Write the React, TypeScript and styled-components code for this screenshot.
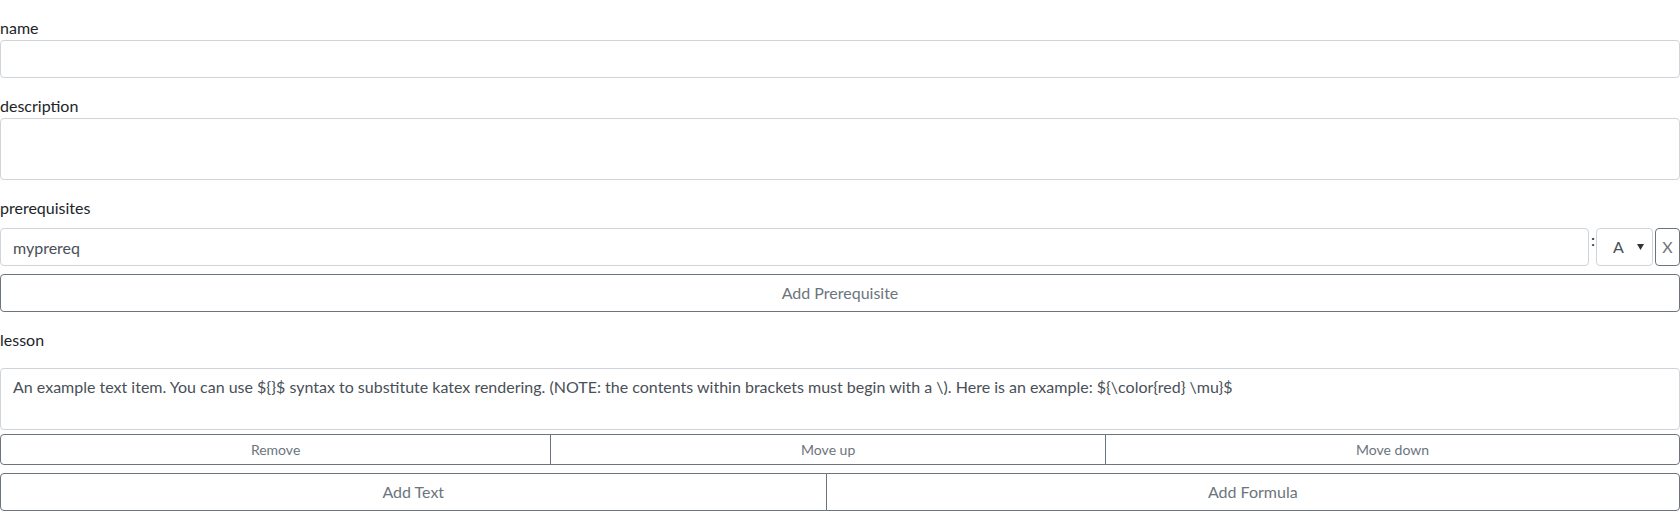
import React from "react";
import styled, { createGlobalStyle, css } from "styled-components";

const GlobalStyle = createGlobalStyle`
  *, *::before, *::after { box-sizing: border-box; }
  body {
    margin: 0;
    background: #ffffff;
    color: #212529;
    font-family: "Lato", "Liberation Sans", sans-serif;
    font-size: 16px;
    line-height: 1.5;
  }
`;

const Form = styled.form`
  padding-top: 16px;
  display: flex;
  flex-direction: column;
`;

const FormGroup = styled.div`
  margin-bottom: 16px;
  display: flex;
  flex-direction: column;
`;

const Label = styled.label`
  display: block;
  margin: 0;
  font-size: 16px;
  line-height: 24px;
  color: #212529;
`;

const controlBase = css`
  display: block;
  width: 100%;
  padding: 6px 12px;
  font-family: "Lato", "Liberation Sans", sans-serif;
  font-size: 16px;
  line-height: 24px;
  color: #495057;
  background: #ffffff;
  border: 1px solid #ced4da;
  border-radius: 4px;
  outline: none;
`;

const TextInput = styled.input`
  ${controlBase};
  height: 38px;
`;

const TextArea = styled.textarea<{ $gap?: number }>`
  ${controlBase};
  height: 62px;
  resize: none;
  overflow: hidden;
  margin-top: ${(p) => p.$gap ?? 0}px;
`;

const PrereqList = styled.div`
  display: flex;
  flex-direction: column;
  gap: 8px;
  padding-top: 8px;
`;

const PrereqRow = styled.div`
  display: flex;
  align-items: flex-start;
`;

const RowInput = styled(TextInput)`
  flex: 1 1 auto;
  width: auto;
  min-width: 0;
`;

const Colon = styled.span`
  font-size: 16px;
  line-height: 24px;
  color: #212529;
  padding: 0 1px 0 2px;
`;

const SelectWrap = styled.div`
  position: relative;
  width: 57px;
  flex: 0 0 57px;
`;

const Select = styled.select`
  ${controlBase};
  height: 38px;
  padding: 6px 20px 6px 16px;
  appearance: none;
  -webkit-appearance: none;
  cursor: pointer;
`;

const Caret = styled.svg`
  position: absolute;
  right: 9px;
  top: 16px;
  width: 7px;
  height: 6px;
  pointer-events: none;
`;

const outlineBtn = css`
  font-family: "Lato", "Liberation Sans", sans-serif;
  color: #6c757d;
  background: #ffffff;
  border: 1px solid #6c757d;
  border-radius: 4px;
  cursor: pointer;
  text-align: center;
`;

const RemoveX = styled.button`
  ${outlineBtn};
  margin-left: 2px;
  width: 25px;
  height: 38px;
  padding: 0;
  font-size: 16px;
  line-height: 24px;
`;

const BlockButton = styled.button`
  ${outlineBtn};
  display: block;
  width: 100%;
  height: 38px;
  padding: 6px 12px;
  font-size: 16px;
  line-height: 24px;
`;

const BtnGroup = styled.div<{ $small?: boolean; $gap: number }>`
  display: flex;
  width: 100%;
  margin-top: ${(p) => p.$gap}px;
`;

const GroupButton = styled.button<{ $small?: boolean }>`
  ${outlineBtn};
  flex: 1 1 auto;
  height: ${(p) => (p.$small ? 31 : 38)}px;
  padding: ${(p) => (p.$small ? "4px 8px" : "6px 12px")};
  font-size: ${(p) => (p.$small ? 14 : 16)}px;
  line-height: ${(p) => (p.$small ? 21 : 24)}px;
  white-space: nowrap;
  & + & {
    margin-left: -1px;
  }
  &:not(:first-child) {
    border-top-left-radius: 0;
    border-bottom-left-radius: 0;
  }
  &:not(:last-child) {
    border-top-right-radius: 0;
    border-bottom-right-radius: 0;
  }
`;

const LESSON_TEXT =
  "An example text item. You can use ${}$ syntax to substitute katex rendering. (NOTE: the contents within brackets must begin with a \\). Here is an example: ${\\color{red} \\mu}$";

export default function App() {
  return (
    <>
      <GlobalStyle />
      <Form onSubmit={(e) => e.preventDefault()}>
        <FormGroup>
          <Label htmlFor="name">name</Label>
          <TextInput id="name" type="text" defaultValue="" />
        </FormGroup>
        <FormGroup>
          <Label htmlFor="description">description</Label>
          <TextArea id="description" rows={2} defaultValue="" />
        </FormGroup>
        <FormGroup>
          <Label>prerequisites</Label>
          <PrereqList>
            <PrereqRow>
              <RowInput type="text" defaultValue="myprereq" />
              <Colon>:</Colon>
              <SelectWrap>
                <Select defaultValue="A">
                  <option value="A">A</option>
                  <option value="B">B</option>
                  <option value="C">C</option>
                </Select>
                <Caret viewBox="0 0 7 6">
                  <path d="M0 0 L7 0 L3.5 6 Z" fill="#333" />
                </Caret>
              </SelectWrap>
              <RemoveX type="button">X</RemoveX>
            </PrereqRow>
            <BlockButton type="button">Add Prerequisite</BlockButton>
          </PrereqList>
        </FormGroup>
        <FormGroup>
          <Label>lesson</Label>
          <TextArea $gap={16} rows={2} defaultValue={LESSON_TEXT} />
          <BtnGroup $gap={4}>
            <GroupButton type="button" $small>
              Remove
            </GroupButton>
            <GroupButton type="button" $small>
              Move up
            </GroupButton>
            <GroupButton type="button" $small>
              Move down
            </GroupButton>
          </BtnGroup>
          <BtnGroup $gap={8}>
            <GroupButton type="button">Add Text</GroupButton>
            <GroupButton type="button">Add Formula</GroupButton>
          </BtnGroup>
        </FormGroup>
      </Form>
    </>
  );
}
